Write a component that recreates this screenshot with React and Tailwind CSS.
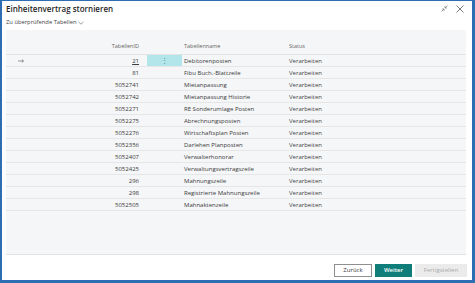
import React from "react";

const rows = [
  ["21", "Debitorenposten"],
  ["81", "Fibu Buch.-Blattzeile"],
  ["5052741", "Mietanpassung"],
  ["5052742", "Mietanpassung Historie"],
  ["5052271", "RE Sonderumlage Posten"],
  ["5052275", "Abrechnungsposten"],
  ["5052276", "Wirtschaftsplan Posten"],
  ["5052356", "Darlehen Planposten"],
  ["5052407", "Verwalterhonorar"],
  ["5052425", "Verwaltungsvertragszeile"],
  ["296", "Mahnungszeile"],
  ["298", "Registrierte Mahnungszeile"],
  ["5052505", "Mahnaktenzeile"],
];

export default function App() {
  return (
    <div
      className="w-[475px] h-[283px] bg-white border-t border-l-2 border-r-[3px] border-b-[3px] border-[#2f6db3] flex flex-col text-[#262626]"
      style={{ fontFamily: '"Open Sans", "Noto Sans", sans-serif' }}
    >
      <div className="h-[15px] flex items-center pl-[4px] pr-[8px]">
        <div className="text-[8px] font-semibold leading-none text-[#1f1f1f]">
          Einheitenvertrag stornieren
        </div>
        <div className="ml-auto flex items-center gap-[8px]">
          <svg width="7" height="7" viewBox="0 0 7 7" fill="none" stroke="#8a8a8a" strokeWidth="0.9">
            <path d="M6.5 0.5 L4 3 M4 1.2 V3 H5.8" />
            <path d="M0.5 6.5 L3 4 M1.2 4 H3 V5.8" />
          </svg>
          <svg width="8" height="8" viewBox="0 0 8 8" fill="none" stroke="#6b6b6b" strokeWidth="0.9">
            <path d="M0.5 0.5 L7.5 7.5 M7.5 0.5 L0.5 7.5" />
          </svg>
        </div>
      </div>
      <div className="h-[14px] flex items-center pl-[4px]">
        <span className="text-[5.8px] leading-none text-[#444]">Zu überprüfende Tabellen</span>
        <svg className="ml-[1px]" width="6" height="4" viewBox="0 0 6 4" fill="none" stroke="#777" strokeWidth="0.7">
          <path d="M0.5 0.8 L3 3.2 L5.5 0.8" />
        </svg>
      </div>
      <div className="ml-[4px] mr-[6px] h-[225px] bg-[#f5f6f7] border-b border-[#e2e2e2] flex flex-col">
        <div className="h-[25px] flex items-end pb-[5px] border-b border-[#e3e3e3] text-[5.5px] leading-none text-[#666]">
          <div className="w-[133px] text-right">TabellenID</div>
          <div className="w-[45px]" />
          <div className="w-[105px]">Tabellenname</div>
          <div>Status</div>
        </div>
        {rows.map(([id, name], i) => (
          <div
            key={id}
            className="h-[12px] flex items-center border-b border-[#e6e6e6] text-[6px] leading-none text-[#3a3a3a]"
          >
            <div className="w-[133px] flex items-center">
              {i === 0 ? (
                <svg className="ml-[12px]" width="6" height="4" viewBox="0 0 6 4" fill="none" stroke="#555" strokeWidth="0.6">
                  <path d="M0 2 H5.5 M3.8 0.4 L5.5 2 L3.8 3.6" />
                </svg>
              ) : null}
              <span className={"ml-auto " + (i === 0 ? "underline" : "")}>{id}</span>
            </div>
            <div className="w-[8px]" />
            {i === 0 ? (
              <div className="w-[35px] h-full bg-[#b3e6ea] flex items-center justify-center text-[#4a8a90] text-[7px]">
                ⋮
              </div>
            ) : (
              <div className="w-[35px]" />
            )}
            <div className="w-[2px]" />
            <div className="w-[105px] whitespace-nowrap">{name}</div>
            <div className="text-[#444]">Verarbeiten</div>
          </div>
        ))}
      </div>
      <div className="flex-1 flex items-start justify-end pt-[9px] pr-[5px] gap-[3px] text-[6px]">
        <div className="w-[38px] h-[13px] border border-[#8f8f8f] bg-white flex items-center justify-center text-[#333]">
          Zurück
        </div>
        <div className="w-[37px] h-[13px] bg-[#0f7d7a] flex items-center justify-center text-white font-semibold">
          Weiter
        </div>
        <div className="w-[52px] h-[13px] bg-[#ebebeb] flex items-center justify-center text-[#aaaaaa]">
          Fertigstellen
        </div>
      </div>
    </div>
  );
}
